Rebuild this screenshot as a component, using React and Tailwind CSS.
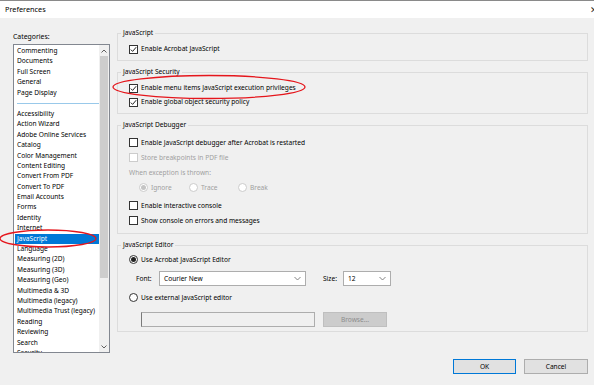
import React from 'react'

const categories = [
  'Accessibility', 'Action Wizard', 'Adobe Online Services', 'Catalog', 'Color Management',
  'Content Editing', 'Convert From PDF', 'Convert To PDF', 'Email Accounts', 'Forms', 'Identity',
  'Internet', 'JavaScript', 'Language', 'Measuring (2D)', 'Measuring (3D)', 'Measuring (Geo)',
  'Multimedia & 3D', 'Multimedia (legacy)', 'Multimedia Trust (legacy)', 'Reading', 'Reviewing',
  'Search', 'Security',
]
const top = ['Commenting', 'Documents', 'Full Screen', 'General', 'Page Display']

function Check({ checked, disabled, label }) {
  return (
    <div className="flex items-center h-full">
      <span className={`w-[9px] h-[9px] border bg-white flex items-center justify-center ${disabled ? 'border-[#cccccc]' : 'border-[#333]'}`}>
        {checked && (
          <svg width="7" height="7" viewBox="0 0 7 7">
            <polyline points="0.8,3.6 2.6,5.4 6.2,1.2" fill="none" stroke="#222" strokeWidth="1" />
          </svg>
        )}
      </span>
      <span className={`ml-[3px] ${disabled ? 'text-[#a0a0a0]' : 'text-black'}`}>{label}</span>
    </div>
  )
}

function Radio({ checked, disabled, label }) {
  return (
    <div className="flex items-center h-full">
      <span className={`w-[9px] h-[9px] rounded-full border bg-white flex items-center justify-center ${disabled ? 'border-[#cccccc]' : 'border-[#333]'}`}>
        {checked && <span className={`w-[5px] h-[5px] rounded-full ${disabled ? 'bg-[#c4c4c4]' : 'bg-[#222]'}`} />}
      </span>
      <span className={`ml-[3px] ${disabled ? 'text-[#a0a0a0]' : 'text-black'}`}>{label}</span>
    </div>
  )
}

function Group({ title, h, children }) {
  return (
    <div className={`border border-[#dcdcdc] ${h} flex flex-col`}>
      <div className="-mt-[6px] ml-[3px] w-fit bg-[#f0f0f0] px-[2px] h-[10px] leading-[10px]">{title}</div>
      {children}
    </div>
  )
}

function Chevron() {
  return (
    <svg width="7" height="5" viewBox="0 0 7 5">
      <polyline points="0.5,1 3.5,4 6.5,1" fill="none" stroke="#777" strokeWidth="0.9" />
    </svg>
  )
}

export default function App() {
  return (
    <div
      className="relative w-[594px] h-[385px] bg-[#f0f0f0] overflow-hidden text-[6.6px] text-black"
      style={{ fontFamily: '"Noto Sans", sans-serif' }}
    >
      {/* title bar */}
      <div className="h-[18px] bg-white border-t border-[#8a8a8a] flex items-center justify-between pl-[5px]">
        <span className="text-[7.3px]">Preferences</span>
        <span className="text-[9px] text-[#333] mr-[-4px]">✕</span>
      </div>

      <div className="flex">
        {/* left column */}
        <div className="w-[117px] pl-[13px] flex flex-col">
          <div className="h-[25px] flex items-end pb-[1px] leading-[10px] text-[6.9px]">Categories:</div>
          <div className="mt-[1px] w-[97px] h-[309px] border border-[#828790] bg-white flex overflow-hidden">
            <div className="flex-1 pl-[1px] pt-[1px] overflow-hidden">
              {top.map((t) => (
                <div key={t} className="h-[10.4px] leading-[10.4px] pl-[2px] whitespace-nowrap">{t}</div>
              ))}
              <div className="h-[11px] flex items-center pl-[2px]">
                <div className="w-full h-px bg-[#99c9ea]" />
              </div>
              {categories.map((t) => (
                <div
                  key={t}
                  className={`h-[10.4px] leading-[10.4px] pl-[2px] whitespace-nowrap ${t === 'JavaScript' ? 'bg-[#0078d7] text-white' : ''}`}
                >
                  {t}
                </div>
              ))}
            </div>
            <div className="w-[10px] bg-[#f0f0f0] flex flex-col items-center">
              <div className="h-[11px] flex items-center justify-center">
                <svg width="6" height="4" viewBox="0 0 6 4"><polyline points="0.5,3.5 3,1 5.5,3.5" fill="none" stroke="#606060" strokeWidth="1" /></svg>
              </div>
              <div className="w-[8px] h-[222px] bg-[#cdcdcd]" />
              <div className="flex-1" />
              <div className="h-[11px] flex items-center justify-center">
                <svg width="6" height="4" viewBox="0 0 6 4"><polyline points="0.5,0.5 3,3 5.5,0.5" fill="none" stroke="#606060" strokeWidth="1" /></svg>
              </div>
            </div>
          </div>
        </div>

        {/* right column */}
        <div className="w-[471px] flex flex-col pt-[15px]">
          <Group title="JavaScript" h="h-[28px]">
            <div className="mt-[4px] h-[14px] pl-[11px]"><Check checked label="Enable Acrobat JavaScript" /></div>
          </Group>

          <div className="mt-[11px]">
            <Group title="JavaScript Security" h="h-[42px]">
              <div className="mt-[4px] h-[14px] pl-[11px]"><Check checked label="Enable menu items JavaScript execution privileges" /></div>
              <div className="h-[14px] pl-[11px]"><Check checked label="Enable global object security policy" /></div>
            </Group>
          </div>

          <div className="mt-[11px]">
            <Group title="JavaScript Debugger" h="h-[109px]">
              <div className="mt-[5px] h-[15px] pl-[11px]"><Check label="Enable JavaScript debugger after Acrobat is restarted" /></div>
              <div className="h-[15px] pl-[11px]"><Check disabled label="Store breakpoints in PDF file" /></div>
              <div className="h-[15px] pl-[11px] flex items-center text-[#a0a0a0]">When exception is thrown:</div>
              <div className="h-[15px] pl-[21px] flex">
                <div className="w-[50px]"><Radio checked disabled label="Ignore" /></div>
                <div className="w-[49px]"><Radio disabled label="Trace" /></div>
                <div><Radio disabled label="Break" /></div>
              </div>
              <div className="mt-[3px] h-[15px] pl-[11px]"><Check label="Enable interactive console" /></div>
              <div className="h-[15px] pl-[11px]"><Check label="Show console on errors and messages" /></div>
            </Group>
          </div>

          <div className="mt-[11px]">
            <Group title="JavaScript Editor" h="h-[87px]">
              <div className="mt-[2px] h-[15px] pl-[11px]"><Radio checked label="Use Acrobat JavaScript Editor" /></div>
              <div className="mt-[4px] h-[15px] pl-[18px] flex items-center">
                <span className="w-[23px]">Font:</span>
                <div className="w-[147px] h-[15px] border border-[#adadad] bg-white flex items-center justify-between pl-[4px] pr-[4px]">
                  <span>Courier New</span>
                  <Chevron />
                </div>
                <span className="ml-[17px] w-[20px]">Size:</span>
                <div className="w-[48px] h-[15px] border border-[#adadad] bg-white flex items-center justify-between pl-[4px] pr-[4px]">
                  <span>12</span>
                  <Chevron />
                </div>
              </div>
              <div className="mt-[4px] h-[15px] pl-[11px]"><Radio label="Use external JavaScript editor" /></div>
              <div className="mt-[7px] h-[15px] pl-[23px] flex">
                <div className="w-[174px] h-[15px] border border-[#adadad] border-l-[#7a7a7a] bg-[#f0f0f0]" />
                <div className="ml-[8px] w-[64px] h-[15px] bg-[#cccccc] border border-[#bfbfbf] text-[#8d8d8d] flex items-center justify-center">Browse...</div>
              </div>
            </Group>
          </div>
        </div>
      </div>

      {/* buttons */}
      <div className="flex justify-end gap-[8px] pr-[6px] mt-[6px]">
        <div className="w-[63px] h-[15px] bg-[#e1e1e1] border border-[#0078d7] flex items-center justify-center">OK</div>
        <div className="w-[64px] h-[15px] bg-[#e1e1e1] border border-[#adadad] flex items-center justify-center">Cancel</div>
      </div>

      {/* red annotation ellipses */}
      <svg className="absolute left-0 top-0 pointer-events-none" width="594" height="385">
        <ellipse cx="48" cy="238.5" rx="48" ry="8.5" fill="none" stroke="#e5161c" strokeWidth="1.3" />
        <ellipse cx="209" cy="87" rx="96" ry="11.5" fill="none" stroke="#e5161c" strokeWidth="1.3" />
      </svg>
    </div>
  )
}
